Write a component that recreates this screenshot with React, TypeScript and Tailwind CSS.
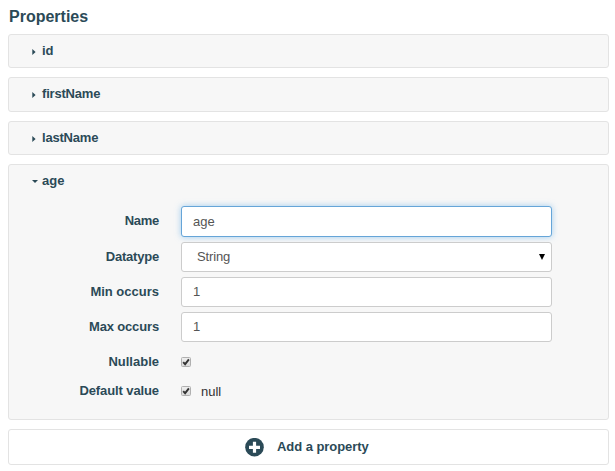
import type { ReactNode } from 'react';

const field =
  'block w-[371px] rounded-[3px] border bg-white px-[11px] text-[13px] text-[#555] outline-none';

function Panel({ name, height, title = '' }: { name: string; height: string; title?: string }) {
  return (
    <section className={`mb-[9px] flex items-center rounded-[3px] border border-[#e3e3e3] bg-[#f7f7f7] pl-[23px] ${height}`}>
      <svg className="mt-[2px] mr-[6px] h-[6px] w-1" viewBox="0 0 4 6">
        <path d="M.3 0L3.6 3L.3 6Z" fill="#2b4a57" />
      </svg>
      <h2 className={`text-[13px] leading-4 font-bold ${title}`}>{name}</h2>
    </section>
  );
}

function Row({ label, height, tracking = '', children }: { label: string; height: string; tracking?: string; children: ReactNode }) {
  return (
    <div className={`flex ${height}`}>
      <label className={`mr-[22px] w-[150px] pt-[6px] text-right text-[13px] leading-[18px] font-bold ${tracking}`}>{label}</label>
      {children}
    </div>
  );
}

function Check() {
  return (
    <svg className="mt-[10px] h-[10px] w-[10px]" viewBox="0 0 10 10">
      <defs>
        <linearGradient id="box" x1="0" y1="0" x2="0" y2="1">
          <stop offset="0" stopColor="#efefef" />
          <stop offset="1" stopColor="#dadada" />
        </linearGradient>
      </defs>
      <rect x=".5" y=".5" width="9" height="9" rx="1" fill="url(#box)" stroke="#b0b0b0" />
      <path d="M2.2 5.2L4.1 7.2L7.9 2.4" fill="none" stroke="#333" strokeWidth="1.9" />
    </svg>
  );
}

export default function App() {
  return (
    <main className="h-[471px] w-[615px] bg-white pr-[6px] pl-2 font-['Liberation_Sans',Arial,sans-serif] text-[#2b4a57]">
      <h1 className="h-[34px] pt-2 pl-px text-base leading-[18px] font-bold">Properties</h1>
      <Panel name="id" height="h-[34px]" />
      <Panel name="firstName" height="h-[35px] pb-px" title="tracking-[-0.2px]" />
      <Panel name="lastName" height="h-[34px]" title="tracking-[-0.2px]" />
      <section className="mb-[9px] h-[256px] rounded-[3px] border border-[#e3e3e3] bg-[#f7f7f7]">
        <div className="flex h-[41px] items-start pt-2 pl-[23px]">
          <svg className="mt-[7px] mr-1 h-[3px] w-[6px]" viewBox="0 0 6 3">
            <path d="M0 0H6L3 3Z" fill="#2b4a57" />
          </svg>
          <h2 className="text-[13px] leading-4 font-bold">age</h2>
        </div>
        <Row label="Name" height="h-9" tracking="tracking-[-0.3px]">
          <input
            className={`${field} h-[31px] border-[#66a5d8] shadow-[0_0_6px_rgba(102,175,233,0.6)]`}
            defaultValue="age"
          />
        </Row>
        <Row label="Datatype" height="h-[35px]" tracking="tracking-[-0.2px]">
          <div className={`${field} flex h-[30px] items-center justify-between border-[#ccc] pr-[6px] pl-[15px]`}>
            <span className="tracking-[-0.15px]">String</span>
            <svg className="h-[6px] w-[6px]" viewBox="0 0 6 6">
              <path d="M0 0H6L3 6Z" fill="#000" />
            </svg>
          </div>
        </Row>
        <Row label="Min occurs" height="h-[35px]">
          <input className={`${field} h-[30px] border-[#ccc] pb-[2px]`} defaultValue="1" />
        </Row>
        <Row label="Max occurs" height="h-[35px]" tracking="tracking-[-0.15px]">
          <input className={`${field} h-[30px] border-[#ccc] pb-[2px]`} defaultValue="1" />
        </Row>
        <Row label="Nullable" height="h-[29px]">
          <Check />
        </Row>
        <Row label="Default value" height="h-[29px]" tracking="tracking-[-0.1px]">
          <Check />
          <span className="ml-[10px] pt-[7px] text-[13px] leading-[18px] text-[#333]">null</span>
        </Row>
      </section>
      <button className="flex h-9 w-full items-center rounded-[3px] border border-[#e3e3e3] bg-white pl-[236px] text-[13px] font-bold">
        <svg className="mr-[13px] h-[19px] w-[19px]" viewBox="0 0 19 19">
          <circle cx="9.5" cy="9.2" r="9.3" fill="#2b4a57" />
          <path d="M9.5 3.8V14.8M4 9.3H15" stroke="#fff" strokeWidth="3.2" />
        </svg>
        <span className="tracking-[-0.05px]">Add a property</span>
      </button>
    </main>
  );
}
